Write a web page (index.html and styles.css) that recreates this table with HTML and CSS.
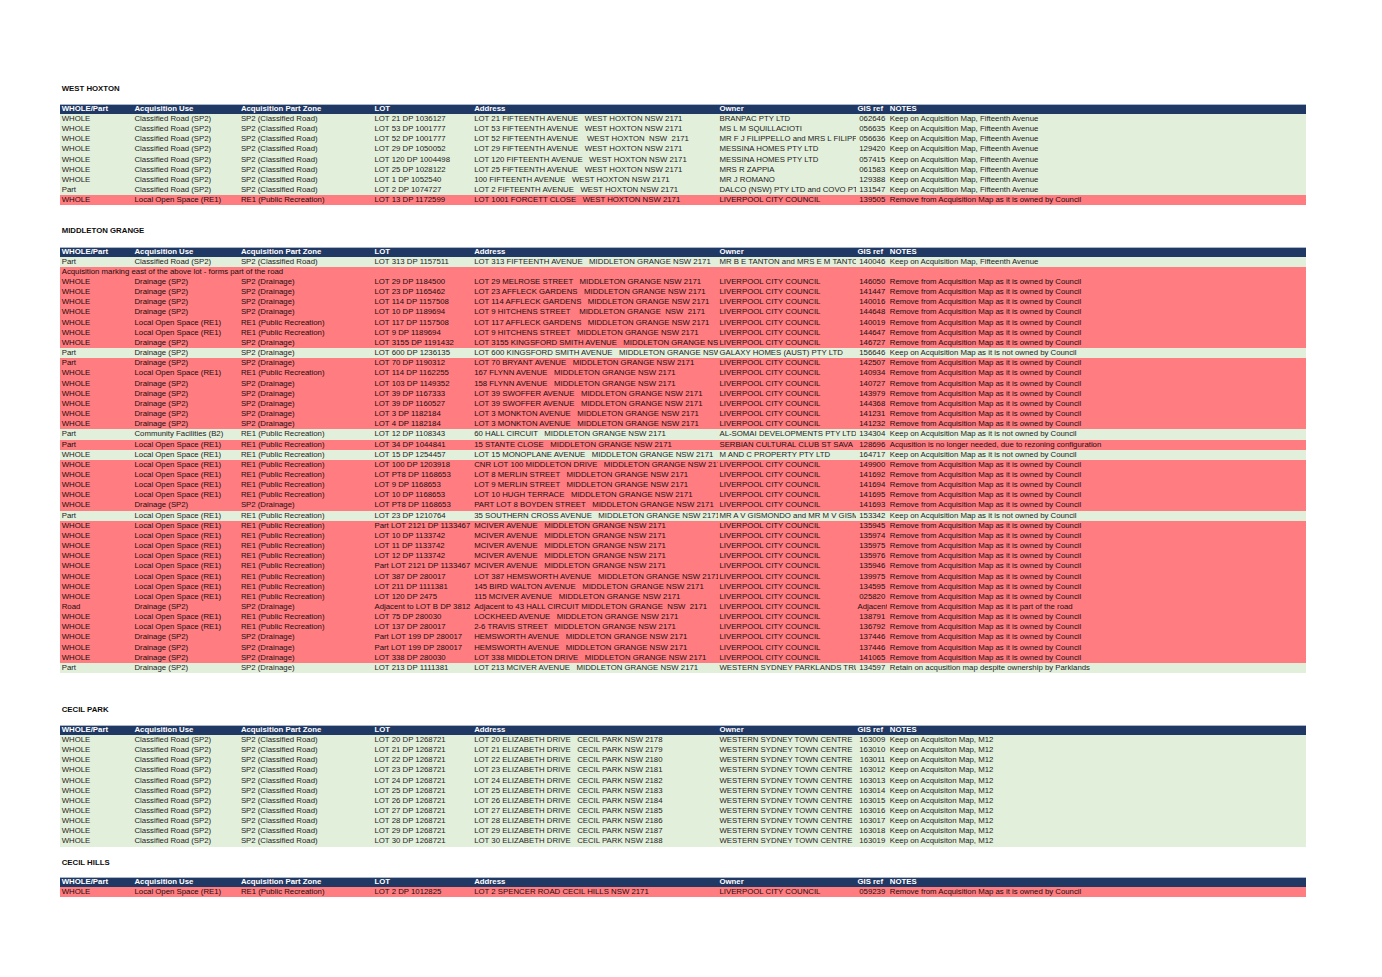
FILE: index.html
```html
<!DOCTYPE html>
<html lang="en">
<head>
<meta charset="utf-8">
<title>Acquisition Review</title>
<link rel="stylesheet" href="styles.css">
</head>
<body>
<div class="page">

<section class="sec">
<h2 class="sec-title">WEST HOXTON</h2>
<table class="sheet">
<colgroup><col class="c1"><col class="c2"><col class="c3"><col class="c4"><col class="c5"><col class="c6"><col class="c7"><col class="c8"></colgroup>
<thead><tr><th>WHOLE/Part</th><th>Acquisition Use</th><th>Acquisition Part Zone</th><th>LOT</th><th>Address</th><th>Owner</th><th>GIS ref</th><th class="notes">NOTES</th></tr></thead>
<tbody>
<tr class="g"><td>WHOLE</td><td>Classified Road (SP2)</td><td>SP2 (Classified Road)</td><td>LOT 21 DP 1036127</td><td>LOT 21 FIFTEENTH AVENUE   WEST HOXTON NSW 2171</td><td>BRANPAC PTY LTD</td><td class="gis">062646</td><td class="notes">Keep on Acquisition Map, Fifteenth Avenue</td></tr>
<tr class="g"><td>WHOLE</td><td>Classified Road (SP2)</td><td>SP2 (Classified Road)</td><td>LOT 53 DP 1001777</td><td>LOT 53 FIFTEENTH AVENUE   WEST HOXTON NSW 2171</td><td>MS L M SQUILLACIOTI</td><td class="gis">056635</td><td class="notes">Keep on Acquisition Map, Fifteenth Avenue</td></tr>
<tr class="g"><td>WHOLE</td><td>Classified Road (SP2)</td><td>SP2 (Classified Road)</td><td>LOT 52 DP 1001777</td><td>LOT 52 FIFTEENTH AVENUE    WEST HOXTON  NSW  2171</td><td>MR F J FILIPPELLO and MRS L FILIPPELLO</td><td class="gis">056636</td><td class="notes">Keep on Acquisition Map, Fifteenth Avenue</td></tr>
<tr class="g"><td>WHOLE</td><td>Classified Road (SP2)</td><td>SP2 (Classified Road)</td><td>LOT 29 DP 1050052</td><td>LOT 29 FIFTEENTH AVENUE   WEST HOXTON NSW 2171</td><td>MESSINA HOMES PTY LTD</td><td class="gis">129420</td><td class="notes">Keep on Acquisition Map, Fifteenth Avenue</td></tr>
<tr class="g"><td>WHOLE</td><td>Classified Road (SP2)</td><td>SP2 (Classified Road)</td><td>LOT 120 DP 1004498</td><td>LOT 120 FIFTEENTH AVENUE   WEST HOXTON NSW 2171</td><td>MESSINA HOMES PTY LTD</td><td class="gis">057415</td><td class="notes">Keep on Acquisition Map, Fifteenth Avenue</td></tr>
<tr class="g"><td>WHOLE</td><td>Classified Road (SP2)</td><td>SP2 (Classified Road)</td><td>LOT 25 DP 1028122</td><td>LOT 25 FIFTEENTH AVENUE   WEST HOXTON NSW 2171</td><td>MRS R ZAPPIA</td><td class="gis">061583</td><td class="notes">Keep on Acquisition Map, Fifteenth Avenue</td></tr>
<tr class="g"><td>WHOLE</td><td>Classified Road (SP2)</td><td>SP2 (Classified Road)</td><td>LOT 1 DP 1052540</td><td>100 FIFTEENTH AVENUE   WEST HOXTON NSW 2171</td><td>MR J ROMANO</td><td class="gis">129388</td><td class="notes">Keep on Acquisition Map, Fifteenth Avenue</td></tr>
<tr class="g"><td>Part</td><td>Classified Road (SP2)</td><td>SP2 (Classified Road)</td><td>LOT 2 DP 1074727</td><td>LOT 2 FIFTEENTH AVENUE   WEST HOXTON NSW 2171</td><td>DALCO (NSW) PTY LTD and COVO PTY LTD</td><td class="gis">131547</td><td class="notes">Keep on Acquisition Map, Fifteenth Avenue</td></tr>
<tr class="r"><td>WHOLE</td><td>Local Open Space (RE1)</td><td>RE1 (Public Recreation)</td><td>LOT 13 DP 1172599</td><td>LOT 1001 FORCETT CLOSE   WEST HOXTON NSW 2171</td><td>LIVERPOOL CITY COUNCIL</td><td class="gis">139505</td><td class="notes">Remove from Acquisition Map as it is owned by Council</td></tr>
</tbody>
</table>
</section>

<section class="sec sec-mg">
<h2 class="sec-title">MIDDLETON GRANGE</h2>
<table class="sheet">
<colgroup><col class="c1"><col class="c2"><col class="c3"><col class="c4"><col class="c5"><col class="c6"><col class="c7"><col class="c8"></colgroup>
<thead><tr><th>WHOLE/Part</th><th>Acquisition Use</th><th>Acquisition Part Zone</th><th>LOT</th><th>Address</th><th>Owner</th><th>GIS ref</th><th class="notes">NOTES</th></tr></thead>
<tbody>
<tr class="g"><td>Part</td><td>Classified Road (SP2)</td><td>SP2 (Classified Road)</td><td>LOT 313 DP 1157511</td><td>LOT 313 FIFTEENTH AVENUE   MIDDLETON GRANGE NSW 2171</td><td>MR B E TANTON and MRS E M TANTON</td><td class="gis">140046</td><td class="notes">Keep on Acquisition Map, Fifteenth Avenue</td></tr>
<tr class="r"><td colspan="8">Acquisition marking east of the above lot - forms part of the road</td></tr>
<tr class="r"><td>WHOLE</td><td>Drainage (SP2)</td><td>SP2 (Drainage)</td><td>LOT 29 DP 1184500</td><td>LOT 29 MELROSE STREET   MIDDLETON GRANGE NSW 2171</td><td>LIVERPOOL CITY COUNCIL</td><td class="gis">146050</td><td class="notes">Remove from Acquisition Map as it is owned by Council</td></tr>
<tr class="r"><td>WHOLE</td><td>Drainage (SP2)</td><td>SP2 (Drainage)</td><td>LOT 23 DP 1165462</td><td>LOT 23 AFFLECK GARDENS   MIDDLETON GRANGE NSW 2171</td><td>LIVERPOOL CITY COUNCIL</td><td class="gis">141447</td><td class="notes">Remove from Acquisition Map as it is owned by Council</td></tr>
<tr class="r"><td>WHOLE</td><td>Drainage (SP2)</td><td>SP2 (Drainage)</td><td>LOT 114 DP 1157508</td><td>LOT 114 AFFLECK GARDENS   MIDDLETON GRANGE NSW 2171</td><td>LIVERPOOL CITY COUNCIL</td><td class="gis">140016</td><td class="notes">Remove from Acquisition Map as it is owned by Council</td></tr>
<tr class="r"><td>WHOLE</td><td>Drainage (SP2)</td><td>SP2 (Drainage)</td><td>LOT 10 DP 1189694</td><td>LOT 9 HITCHENS STREET    MIDDLETON GRANGE  NSW  2171</td><td>LIVERPOOL CITY COUNCIL</td><td class="gis">144648</td><td class="notes">Remove from Acquisition Map as it is owned by Council</td></tr>
<tr class="r"><td>WHOLE</td><td>Local Open Space (RE1)</td><td>RE1 (Public Recreation)</td><td>LOT 117 DP 1157508</td><td>LOT 117 AFFLECK GARDENS   MIDDLETON GRANGE NSW 2171</td><td>LIVERPOOL CITY COUNCIL</td><td class="gis">140019</td><td class="notes">Remove from Acquisition Map as it is owned by Council</td></tr>
<tr class="r"><td>WHOLE</td><td>Local Open Space (RE1)</td><td>RE1 (Public Recreation)</td><td>LOT 9 DP 1189694</td><td>LOT 9 HITCHENS STREET   MIDDLETON GRANGE NSW 2171</td><td>LIVERPOOL CITY COUNCIL</td><td class="gis">144647</td><td class="notes">Remove from Acquisition Map as it is owned by Council</td></tr>
<tr class="r"><td>WHOLE</td><td>Drainage (SP2)</td><td>SP2 (Drainage)</td><td>LOT 3155 DP 1191432</td><td>LOT 3155 KINGSFORD SMITH AVENUE   MIDDLETON GRANGE NSW 2171</td><td>LIVERPOOL CITY COUNCIL</td><td class="gis">146727</td><td class="notes">Remove from Acquisition Map as it is owned by Council</td></tr>
<tr class="g"><td>Part</td><td>Drainage (SP2)</td><td>SP2 (Drainage)</td><td>LOT 600 DP 1236135</td><td>LOT 600 KINGSFORD SMITH AVENUE   MIDDLETON GRANGE NSW 2171</td><td>GALAXY HOMES (AUST) PTY LTD</td><td class="gis">156646</td><td class="notes">Keep on Acquisition Map as it is not owned by Council</td></tr>
<tr class="r"><td>Part</td><td>Drainage (SP2)</td><td>SP2 (Drainage)</td><td>LOT 70 DP 1190312</td><td>LOT 70 BRYANT AVENUE   MIDDLETON GRANGE NSW 2171</td><td>LIVERPOOL CITY COUNCIL</td><td class="gis">142507</td><td class="notes">Remove from Acquisition Map as it is owned by Council</td></tr>
<tr class="r"><td>WHOLE</td><td>Local Open Space (RE1)</td><td>RE1 (Public Recreation)</td><td>LOT 114 DP 1162255</td><td>167 FLYNN AVENUE   MIDDLETON GRANGE NSW 2171</td><td>LIVERPOOL CITY COUNCIL</td><td class="gis">140934</td><td class="notes">Remove from Acquisition Map as it is owned by Council</td></tr>
<tr class="r"><td>WHOLE</td><td>Drainage (SP2)</td><td>SP2 (Drainage)</td><td>LOT 103 DP 1149352</td><td>158 FLYNN AVENUE   MIDDLETON GRANGE NSW 2171</td><td>LIVERPOOL CITY COUNCIL</td><td class="gis">140727</td><td class="notes">Remove from Acquisition Map as it is owned by Council</td></tr>
<tr class="r"><td>WHOLE</td><td>Drainage (SP2)</td><td>SP2 (Drainage)</td><td>LOT 39 DP 1167333</td><td>LOT 39 SWOFFER AVENUE   MIDDLETON GRANGE NSW 2171</td><td>LIVERPOOL CITY COUNCIL</td><td class="gis">143979</td><td class="notes">Remove from Acquisition Map as it is owned by Council</td></tr>
<tr class="r"><td>WHOLE</td><td>Drainage (SP2)</td><td>SP2 (Drainage)</td><td>LOT 39 DP 1160527</td><td>LOT 39 SWOFFER AVENUE   MIDDLETON GRANGE NSW 2171</td><td>LIVERPOOL CITY COUNCIL</td><td class="gis">144368</td><td class="notes">Remove from Acquisition Map as it is owned by Council</td></tr>
<tr class="r"><td>WHOLE</td><td>Drainage (SP2)</td><td>SP2 (Drainage)</td><td>LOT 3 DP 1182184</td><td>LOT 3 MONKTON AVENUE   MIDDLETON GRANGE NSW 2171</td><td>LIVERPOOL CITY COUNCIL</td><td class="gis">141231</td><td class="notes">Remove from Acquisition Map as it is owned by Council</td></tr>
<tr class="r"><td>WHOLE</td><td>Drainage (SP2)</td><td>SP2 (Drainage)</td><td>LOT 4 DP 1182184</td><td>LOT 3 MONKTON AVENUE   MIDDLETON GRANGE NSW 2171</td><td>LIVERPOOL CITY COUNCIL</td><td class="gis">141232</td><td class="notes">Remove from Acquisition Map as it is owned by Council</td></tr>
<tr class="g"><td>Part</td><td>Community Facilities (B2)</td><td>RE1 (Public Recreation)</td><td>LOT 12 DP 1108343</td><td>60 HALL CIRCUIT   MIDDLETON GRANGE NSW 2171</td><td>AL-SOMAI DEVELOPMENTS PTY LTD</td><td class="gis">134304</td><td class="notes">Keep on Acquisition Map as it is not owned by Council</td></tr>
<tr class="r"><td>Part</td><td>Local Open Space (RE1)</td><td>RE1 (Public Recreation)</td><td>LOT 34 DP 1044841</td><td>15 STANTE CLOSE   MIDDLETON GRANGE NSW 2171</td><td>SERBIAN CULTURAL CLUB ST SAVA</td><td class="gis">128696</td><td class="notes">Acqusition is no longer needed, due to rezoning configuration</td></tr>
<tr class="g"><td>WHOLE</td><td>Local Open Space (RE1)</td><td>RE1 (Public Recreation)</td><td>LOT 15 DP 1254457</td><td>LOT 15 MONOPLANE AVENUE   MIDDLETON GRANGE NSW 2171</td><td>M AND C PROPERTY PTY LTD</td><td class="gis">164717</td><td class="notes">Keep on Acquisition Map as it is not owned by Council</td></tr>
<tr class="r"><td>WHOLE</td><td>Local Open Space (RE1)</td><td>RE1 (Public Recreation)</td><td>LOT 100 DP 1203918</td><td>CNR LOT 100 MIDDLETON DRIVE   MIDDLETON GRANGE NSW 2171</td><td>LIVERPOOL CITY COUNCIL</td><td class="gis">149900</td><td class="notes">Remove from Acquisition Map as it is owned by Council</td></tr>
<tr class="r"><td>WHOLE</td><td>Local Open Space (RE1)</td><td>RE1 (Public Recreation)</td><td>LOT PT8 DP 1168653</td><td>LOT 8 MERLIN STREET   MIDDLETON GRANGE NSW 2171</td><td>LIVERPOOL CITY COUNCIL</td><td class="gis">141692</td><td class="notes">Remove from Acquisition Map as it is owned by Council</td></tr>
<tr class="r"><td>WHOLE</td><td>Local Open Space (RE1)</td><td>RE1 (Public Recreation)</td><td>LOT 9 DP 1168653</td><td>LOT 9 MERLIN STREET   MIDDLETON GRANGE NSW 2171</td><td>LIVERPOOL CITY COUNCIL</td><td class="gis">141694</td><td class="notes">Remove from Acquisition Map as it is owned by Council</td></tr>
<tr class="r"><td>WHOLE</td><td>Local Open Space (RE1)</td><td>RE1 (Public Recreation)</td><td>LOT 10 DP 1168653</td><td>LOT 10 HUGH TERRACE   MIDDLETON GRANGE NSW 2171</td><td>LIVERPOOL CITY COUNCIL</td><td class="gis">141695</td><td class="notes">Remove from Acquisition Map as it is owned by Council</td></tr>
<tr class="r"><td>WHOLE</td><td>Drainage (SP2)</td><td>SP2 (Drainage)</td><td>LOT PT8 DP 1168653</td><td>PART LOT 8 BOYDEN STREET   MIDDLETON GRANGE NSW 2171</td><td>LIVERPOOL CITY COUNCIL</td><td class="gis">141693</td><td class="notes">Remove from Acquisition Map as it is owned by Council</td></tr>
<tr class="g"><td>Part</td><td>Local Open Space (RE1)</td><td>RE1 (Public Recreation)</td><td>LOT 23 DP 1210764</td><td>35 SOUTHERN CROSS AVENUE   MIDDLETON GRANGE NSW 2171</td><td>MR A V GISMONDO and MR M V GISMONDO</td><td class="gis">153342</td><td class="notes">Keep on Acquisition Map as it is not owned by Council</td></tr>
<tr class="r"><td>WHOLE</td><td>Local Open Space (RE1)</td><td>RE1 (Public Recreation)</td><td>Part LOT 2121 DP 1133467</td><td>MCIVER AVENUE   MIDDLETON GRANGE NSW 2171</td><td>LIVERPOOL CITY COUNCIL</td><td class="gis">135945</td><td class="notes">Remove from Acquisition Map as it is owned by Council</td></tr>
<tr class="r"><td>WHOLE</td><td>Local Open Space (RE1)</td><td>RE1 (Public Recreation)</td><td>LOT 10 DP 1133742</td><td>MCIVER AVENUE   MIDDLETON GRANGE NSW 2171</td><td>LIVERPOOL CITY COUNCIL</td><td class="gis">135974</td><td class="notes">Remove from Acquisition Map as it is owned by Council</td></tr>
<tr class="r"><td>WHOLE</td><td>Local Open Space (RE1)</td><td>RE1 (Public Recreation)</td><td>LOT 11 DP 1133742</td><td>MCIVER AVENUE   MIDDLETON GRANGE NSW 2171</td><td>LIVERPOOL CITY COUNCIL</td><td class="gis">135975</td><td class="notes">Remove from Acquisition Map as it is owned by Council</td></tr>
<tr class="r"><td>WHOLE</td><td>Local Open Space (RE1)</td><td>RE1 (Public Recreation)</td><td>LOT 12 DP 1133742</td><td>MCIVER AVENUE   MIDDLETON GRANGE NSW 2171</td><td>LIVERPOOL CITY COUNCIL</td><td class="gis">135976</td><td class="notes">Remove from Acquisition Map as it is owned by Council</td></tr>
<tr class="r"><td>WHOLE</td><td>Local Open Space (RE1)</td><td>RE1 (Public Recreation)</td><td>Part LOT 2121 DP 1133467</td><td>MCIVER AVENUE   MIDDLETON GRANGE NSW 2171</td><td>LIVERPOOL CITY COUNCIL</td><td class="gis">135946</td><td class="notes">Remove from Acquisition Map as it is owned by Council</td></tr>
<tr class="r"><td>WHOLE</td><td>Local Open Space (RE1)</td><td>RE1 (Public Recreation)</td><td>LOT 387 DP 280017</td><td>LOT 387 HEMSWORTH AVENUE   MIDDLETON GRANGE NSW 2171</td><td>LIVERPOOL CITY COUNCIL</td><td class="gis">139975</td><td class="notes">Remove from Acquisition Map as it is owned by Council</td></tr>
<tr class="r"><td>WHOLE</td><td>Local Open Space (RE1)</td><td>RE1 (Public Recreation)</td><td>LOT 211 DP 1111381</td><td>145 BIRD WALTON AVENUE   MIDDLETON GRANGE NSW 2171</td><td>LIVERPOOL CITY COUNCIL</td><td class="gis">134595</td><td class="notes">Remove from Acquisition Map as it is owned by Council</td></tr>
<tr class="r"><td>WHOLE</td><td>Local Open Space (RE1)</td><td>RE1 (Public Recreation)</td><td>LOT 120 DP 2475</td><td>115 MCIVER AVENUE   MIDDLETON GRANGE NSW 2171</td><td>LIVERPOOL CITY COUNCIL</td><td class="gis">025820</td><td class="notes">Remove from Acquisition Map as it is owned by Council</td></tr>
<tr class="r"><td>Road</td><td>Drainage (SP2)</td><td>SP2 (Drainage)</td><td>Adjacent to LOT B DP 3812</td><td>Adjacent to 43 HALL CIRCUIT MIDDLETON GRANGE  NSW  2171</td><td>LIVERPOOL CITY COUNCIL</td><td class="gis txt">Adjacent</td><td class="notes">Remove from Acquisition Map as it is part of the road</td></tr>
<tr class="r"><td>WHOLE</td><td>Local Open Space (RE1)</td><td>RE1 (Public Recreation)</td><td>LOT 75 DP 280030</td><td>LOCKHEED AVENUE   MIDDLETON GRANGE NSW 2171</td><td>LIVERPOOL CITY COUNCIL</td><td class="gis">138791</td><td class="notes">Remove from Acquisition Map as it is owned by Council</td></tr>
<tr class="r"><td>WHOLE</td><td>Local Open Space (RE1)</td><td>RE1 (Public Recreation)</td><td>LOT 137 DP 280017</td><td>2-6 TRAVIS STREET   MIDDLETON GRANGE NSW 2171</td><td>LIVERPOOL CITY COUNCIL</td><td class="gis">136792</td><td class="notes">Remove from Acquisition Map as it is owned by Council</td></tr>
<tr class="r"><td>WHOLE</td><td>Drainage (SP2)</td><td>SP2 (Drainage)</td><td>Part LOT 199 DP 280017</td><td>HEMSWORTH AVENUE   MIDDLETON GRANGE NSW 2171</td><td>LIVERPOOL CITY COUNCIL</td><td class="gis">137446</td><td class="notes">Remove from Acquisition Map as it is owned by Council</td></tr>
<tr class="r"><td>WHOLE</td><td>Drainage (SP2)</td><td>SP2 (Drainage)</td><td>Part LOT 199 DP 280017</td><td>HEMSWORTH AVENUE   MIDDLETON GRANGE NSW 2171</td><td>LIVERPOOL CITY COUNCIL</td><td class="gis">137446</td><td class="notes">Remove from Acquisition Map as it is owned by Council</td></tr>
<tr class="r"><td>WHOLE</td><td>Drainage (SP2)</td><td>SP2 (Drainage)</td><td>LOT 338 DP 280030</td><td>LOT 338 MIDDLETON DRIVE   MIDDLETON GRANGE NSW 2171</td><td>LIVERPOOL CITY COUNCIL</td><td class="gis">141065</td><td class="notes">Remove from Acquisition Map as it is owned by Council</td></tr>
<tr class="g"><td>Part</td><td>Drainage (SP2)</td><td>SP2 (Drainage)</td><td>LOT 213 DP 1111381</td><td>LOT 213 MCIVER AVENUE   MIDDLETON GRANGE NSW 2171</td><td>WESTERN SYDNEY PARKLANDS TRUST</td><td class="gis">134597</td><td class="notes">Retain on acqusition map despite ownership by Parklands</td></tr>
</tbody>
</table>
</section>

<section class="sec sec-cp">
<h2 class="sec-title">CECIL PARK</h2>
<table class="sheet">
<colgroup><col class="c1"><col class="c2"><col class="c3"><col class="c4"><col class="c5"><col class="c6"><col class="c7"><col class="c8"></colgroup>
<thead><tr><th>WHOLE/Part</th><th>Acquisition Use</th><th>Acquisition Part Zone</th><th>LOT</th><th>Address</th><th>Owner</th><th>GIS ref</th><th class="notes">NOTES</th></tr></thead>
<tbody>
<tr class="g"><td>WHOLE</td><td>Classified Road (SP2)</td><td>SP2 (Classified Road)</td><td>LOT 20 DP 1268721</td><td>LOT 20 ELIZABETH DRIVE   CECIL PARK NSW 2178</td><td>WESTERN SYDNEY TOWN CENTRE</td><td class="gis">163009</td><td class="notes">Keep on Acquisiton Map, M12</td></tr>
<tr class="g"><td>WHOLE</td><td>Classified Road (SP2)</td><td>SP2 (Classified Road)</td><td>LOT 21 DP 1268721</td><td>LOT 21 ELIZABETH DRIVE   CECIL PARK NSW 2179</td><td>WESTERN SYDNEY TOWN CENTRE</td><td class="gis">163010</td><td class="notes">Keep on Acquisiton Map, M12</td></tr>
<tr class="g"><td>WHOLE</td><td>Classified Road (SP2)</td><td>SP2 (Classified Road)</td><td>LOT 22 DP 1268721</td><td>LOT 22 ELIZABETH DRIVE   CECIL PARK NSW 2180</td><td>WESTERN SYDNEY TOWN CENTRE</td><td class="gis">163011</td><td class="notes">Keep on Acquisiton Map, M12</td></tr>
<tr class="g"><td>WHOLE</td><td>Classified Road (SP2)</td><td>SP2 (Classified Road)</td><td>LOT 23 DP 1268721</td><td>LOT 23 ELIZABETH DRIVE   CECIL PARK NSW 2181</td><td>WESTERN SYDNEY TOWN CENTRE</td><td class="gis">163012</td><td class="notes">Keep on Acquisiton Map, M12</td></tr>
<tr class="g"><td>WHOLE</td><td>Classified Road (SP2)</td><td>SP2 (Classified Road)</td><td>LOT 24 DP 1268721</td><td>LOT 24 ELIZABETH DRIVE   CECIL PARK NSW 2182</td><td>WESTERN SYDNEY TOWN CENTRE</td><td class="gis">163013</td><td class="notes">Keep on Acquisiton Map, M12</td></tr>
<tr class="g"><td>WHOLE</td><td>Classified Road (SP2)</td><td>SP2 (Classified Road)</td><td>LOT 25 DP 1268721</td><td>LOT 25 ELIZABETH DRIVE   CECIL PARK NSW 2183</td><td>WESTERN SYDNEY TOWN CENTRE</td><td class="gis">163014</td><td class="notes">Keep on Acquisiton Map, M12</td></tr>
<tr class="g"><td>WHOLE</td><td>Classified Road (SP2)</td><td>SP2 (Classified Road)</td><td>LOT 26 DP 1268721</td><td>LOT 26 ELIZABETH DRIVE   CECIL PARK NSW 2184</td><td>WESTERN SYDNEY TOWN CENTRE</td><td class="gis">163015</td><td class="notes">Keep on Acquisiton Map, M12</td></tr>
<tr class="g"><td>WHOLE</td><td>Classified Road (SP2)</td><td>SP2 (Classified Road)</td><td>LOT 27 DP 1268721</td><td>LOT 27 ELIZABETH DRIVE   CECIL PARK NSW 2185</td><td>WESTERN SYDNEY TOWN CENTRE</td><td class="gis">163016</td><td class="notes">Keep on Acquisiton Map, M12</td></tr>
<tr class="g"><td>WHOLE</td><td>Classified Road (SP2)</td><td>SP2 (Classified Road)</td><td>LOT 28 DP 1268721</td><td>LOT 28 ELIZABETH DRIVE   CECIL PARK NSW 2186</td><td>WESTERN SYDNEY TOWN CENTRE</td><td class="gis">163017</td><td class="notes">Keep on Acquisiton Map, M12</td></tr>
<tr class="g"><td>WHOLE</td><td>Classified Road (SP2)</td><td>SP2 (Classified Road)</td><td>LOT 29 DP 1268721</td><td>LOT 29 ELIZABETH DRIVE   CECIL PARK NSW 2187</td><td>WESTERN SYDNEY TOWN CENTRE</td><td class="gis">163018</td><td class="notes">Keep on Acquisiton Map, M12</td></tr>
<tr class="g"><td>WHOLE</td><td>Classified Road (SP2)</td><td>SP2 (Classified Road)</td><td>LOT 30 DP 1268721</td><td>LOT 30 ELIZABETH DRIVE   CECIL PARK NSW 2188</td><td>WESTERN SYDNEY TOWN CENTRE</td><td class="gis">163019</td><td class="notes">Keep on Acquisiton Map, M12</td></tr>
</tbody>
</table>
</section>

<section class="sec sec-ch">
<h2 class="sec-title sec-title-tight">CECIL HILLS</h2>
<table class="sheet">
<colgroup><col class="c1"><col class="c2"><col class="c3"><col class="c4"><col class="c5"><col class="c6"><col class="c7"><col class="c8"></colgroup>
<thead><tr><th>WHOLE/Part</th><th>Acquisition Use</th><th>Acquisition Part Zone</th><th>LOT</th><th>Address</th><th>Owner</th><th>GIS ref</th><th class="notes">NOTES</th></tr></thead>
<tbody>
<tr class="r"><td>WHOLE</td><td>Local Open Space (RE1)</td><td>RE1 (Public Recreation)</td><td>LOT 2 DP 1012825</td><td>LOT 2 SPENCER ROAD CECIL HILLS NSW 2171</td><td>LIVERPOOL CITY COUNCIL</td><td class="gis">059239</td><td class="notes">Remove from Acquisition Map as it is owned by Council</td></tr>
</tbody>
</table>
</section>

</div>
</body>
</html>
```

FILE: styles.css
```css
html, body {
  margin: 0;
  padding: 0;
  background: #ffffff;
}

body {
  font-family: "Liberation Sans", Arial, sans-serif;
  font-size: 7.8px;
  color: #151515;
}

.page {
  padding: 83.7px 0 0 60px;
}

.sec-mg { margin-top: 21px; }
.sec-cp { margin-top: 31.5px; }
.sec-ch { margin-top: 11px; }

.sec-title {
  margin: 0 0 10.3px;
  padding-left: 1.7px;
  height: 10px;
  line-height: 10px;
  font-size: 7.8px;
  font-weight: bold;
  color: #0d0d0d;
}

.sec-title-tight {
  margin-bottom: 9.4px;
}

.sheet {
  width: 1246px;
  table-layout: fixed;
  border-collapse: collapse;
  border-spacing: 0;
}

.c1 { width: 72.8px; }
.c2 { width: 106.4px; }
.c3 { width: 133.6px; }
.c4 { width: 99.7px; }
.c5 { width: 245.3px; }
.c6 { width: 138px; }
.c7 { width: 31.5px; }
.c8 { width: 418.7px; }

.sheet th,
.sheet td {
  padding: 0 0 0 1.7px;
  white-space: pre;
  overflow: hidden;
  text-align: left;
  vertical-align: middle;
}

.sheet th {
  height: 10px;
  line-height: 10px;
  background: #1f3864;
  color: #ffffff;
  font-weight: bold;
  box-shadow: inset 0 1px 0 #a9b5cb;
}

.sheet td {
  height: 10.15px;
  line-height: 10.15px;
}

.sheet td.gis {
  text-align: right;
  padding: 0 2px 0 0;
}

.sheet td.gis.txt {
  text-align: left;
  padding-left: 1.7px;
}

.sheet .notes {
  padding-left: 2.5px;
}

tr.g td { background: #e2efda; color: #1c1c1c; }
tr.r td { background: #ff7c80; color: #220c0c; }
```
